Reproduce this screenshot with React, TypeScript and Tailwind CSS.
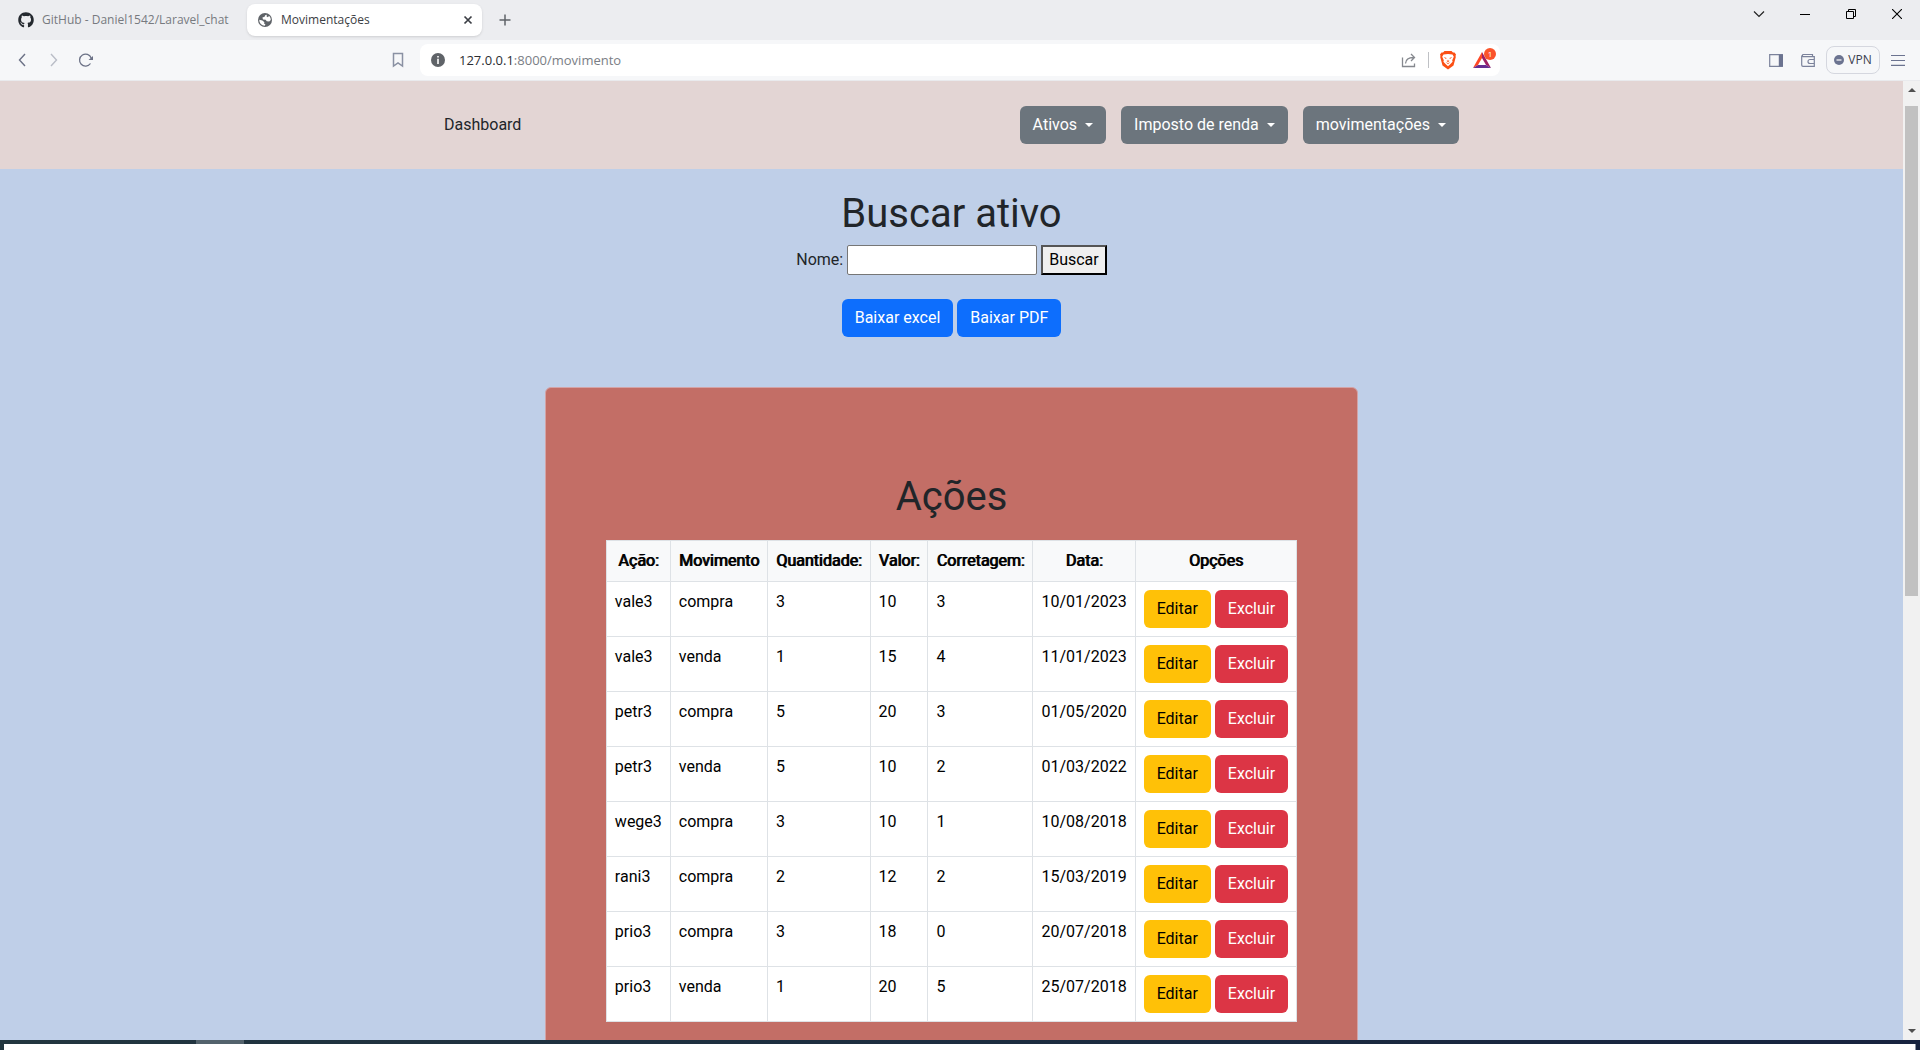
import React from "react";
import { FaGithub } from "react-icons/fa";

type Row = [string, string, string, string, string, string];

const rows: Row[] = [
  ["vale3", "compra", "3", "10", "3", "10/01/2023"],
  ["vale3", "venda", "1", "15", "4", "11/01/2023"],
  ["petr3", "compra", "5", "20", "3", "01/05/2020"],
  ["petr3", "venda", "5", "10", "2", "01/03/2022"],
  ["wege3", "compra", "3", "10", "1", "10/08/2018"],
  ["rani3", "compra", "2", "12", "2", "15/03/2019"],
  ["prio3", "compra", "3", "18", "0", "20/07/2018"],
  ["prio3", "venda", "1", "20", "5", "25/07/2018"],
];

const headers = ["Ação:", "Movimento", "Quantidade:", "Valor:", "Corretagem:", "Data:", "Opções"];

const iconButton = "flex h-8 w-8 items-center justify-center";

function TabStrip() {
  return (
    <div className="flex h-10 items-center bg-[#ecedf0] text-[12px] leading-4">
      <button className="flex h-8 w-[247px] items-center gap-2 pl-[18px] text-[#777a7f]">
        <FaGithub size={16} className="text-[#24292f]" />
        GitHub - Daniel1542/Laravel_chat
      </button>
      <div className="flex h-8 w-[235px] items-center rounded-lg bg-white px-[10px] text-[#3b3e44] shadow-sm">
        <svg width="16" height="16" viewBox="0 0 16 16" aria-hidden="true">
          <circle cx="8" cy="8" r="7" fill="#5f6368" />
          <path d="M9.800 2.800 8.200 3.200 7.600 4.800 5.400 5.600 6 7.400l2.600.4 1.200 1.400 2.400.2 1.400-1.200.2-1A5.800 5.800 0 0 0 12 3.800l-1 1.400-1.400-.6Z" fill="#fff" />
          <path d="M2.200 7.800 5.400 8.600l2 1.600-.4 1.200 1.400.8-.6 1.600A5.800 5.800 0 0 1 2.200 7.800Z" fill="#fff" />
        </svg>
        <span className="ml-2 flex-1">Movimentações</span>
        <button aria-label="Fechar guia" className="mr-[-4px] flex h-4 w-4 items-center justify-center">
          <svg width="10" height="10" viewBox="0 0 10 10" stroke="#3b3e44" strokeWidth="1.700">
            <path d="M1.500 1.500 8.500 8.500M8.500 1.500 1.500 8.500" />
          </svg>
        </button>
      </div>
      <button aria-label="Nova guia" className="ml-[7px] flex h-8 w-8 items-center justify-center">
        <svg width="12" height="12" viewBox="0 0 12 12" stroke="#5f6368" strokeWidth="1.500">
          <path d="M6 .5v11M.5 6h11" />
        </svg>
      </button>
      <div className="ml-auto flex h-10 items-start">
        <button aria-label="Pesquisar guias" className="flex h-7 w-[46px] items-center justify-center">
          <svg width="12" height="12" viewBox="0 0 12 12" fill="none" stroke="#222" strokeWidth="1.200">
            <path d="m1 3.500 5 5 5-5" />
          </svg>
        </button>
        <button aria-label="Minimizar" className="flex h-7 w-[46px] items-center justify-center">
          <svg width="10" height="10" viewBox="0 0 10 10" stroke="#000">
            <path d="M0 5.500h10" />
          </svg>
        </button>
        <button aria-label="Restaurar" className="flex h-7 w-[46px] items-center justify-center">
          <svg width="10" height="10" viewBox="0 0 10 10" fill="none" stroke="#000">
            <path d="M.5 2.500h7v7h-7ZM2.500 2.500v-2h7v7h-2" />
          </svg>
        </button>
        <button aria-label="Fechar" className="flex h-7 w-[46px] items-center justify-center">
          <svg width="10" height="10" viewBox="0 0 10 10" stroke="#000" strokeWidth="1.100">
            <path d="m0 0 10 10M10 0 0 10" />
          </svg>
        </button>
      </div>
    </div>
  );
}

function BraveLion() {
  return (
    <svg width="16" height="20" viewBox="0 0 16 20" aria-hidden="true">
      <path d="M4.500 1h7l1.500 1.500 1.500-.1L16 4.500l-.5 1.500.3 1-2.300 8.500L8 19.500 2.500 15.500.2 7l.3-1L0 4.500l1.500-2.100L3 2.500Z" fill="#fb4f14" />
      <path d="M3.500 4.500 8 4l4.500.5 1.300 2.300-1.600 3.400.4 1.600-2.400 2.400L8 16.200l-2.200-2-2.400-2.400.4-1.600-1.600-3.400Z" fill="#fff" />
      <path d="m3.600 7 3 1-.6 1ZM12.400 7l-3 1 .6 1ZM7 9.500 8 11.500l1-2 .2 1.700L8 12.300l-1.200-1.100ZM5.500 11.800 8 13.200l2.500-1.400L8 14.300Z" fill="#fb4f14" />
    </svg>
  );
}

function Toolbar() {
  return (
    <div className="flex h-[41px] items-center border-b border-[#e9eaed] bg-[#f6f7f9]">
      <div className="flex w-[420px] items-center pl-[6px]">
        <button aria-label="Voltar" className={iconButton}>
          <svg width="8" height="14" viewBox="0 0 8 14" fill="none" stroke="#6b7186" strokeWidth="1.400">
            <path d="M7 1 1.500 7 7 13" />
          </svg>
        </button>
        <button aria-label="Avançar" className={iconButton}>
          <svg width="8" height="14" viewBox="0 0 8 14" fill="none" stroke="#b9bdc7" strokeWidth="1.400">
            <path d="M1 1 6.500 7 1 13" />
          </svg>
        </button>
        <button aria-label="Recarregar" className={iconButton}>
          <svg width="16" height="16" viewBox="0 0 16 16" fill="none" stroke="#6b7186" strokeWidth="1.300">
            <path d="M12.500 11.500A6 6 0 1 1 13.200 6" />
            <path d="M15 4v4h-4.500Z" fill="#6b7186" stroke="none" />
          </svg>
        </button>
        <button aria-label="Adicionar favorito" className="mr-[6px] ml-auto flex h-8 w-8 items-center justify-center">
          <svg width="12" height="16" viewBox="0 0 12 16" fill="none" stroke="#8a91a3" strokeWidth="1.500">
            <path d="M1.500 1.500h9v12.500L6 10.800 1.500 14Z" />
          </svg>
        </button>
      </div>
      <div className="flex h-8 w-[1080px] min-w-0 shrink items-center rounded-lg bg-white pr-[2px] pl-[11px]">
        <svg width="14" height="14" viewBox="0 0 14 14" className="shrink-0" aria-hidden="true">
          <circle cx="7" cy="7" r="7" fill="#5f6368" />
          <path d="M6.200 3h1.600v1.600H6.200ZM6.200 5.800h1.600V11H6.200Z" fill="#fff" />
        </svg>
        <a href="#movimento" className="ml-[14px] flex-1 text-[13px] leading-5 text-[#7a7e85]">
          <span className="text-[#2b2d33]">127.0.0.1</span>:8000/movimento
        </a>
        <button aria-label="Compartilhar" className={iconButton}>
          <svg width="16" height="16" viewBox="0 0 16 16" fill="none" stroke="#85888e" strokeWidth="1.300">
            <path d="M1.500 5.500v9h12v-3M4.500 11.500c.3-4 3-6 8-6M10 2l3.500 3.500L10 9" />
          </svg>
        </button>
        <span className="mx-[3px] h-4 w-px bg-[#bfc1c5]" />
        <button aria-label="Brave Shields" className={iconButton}>
          <BraveLion />
        </button>
        <button aria-label="Brave Rewards" className="relative ml-[2px] flex h-8 w-8 items-center justify-center">
          <svg width="18" height="16" viewBox="0 0 18 16">
            <path d="M9 0 0 16l5-3 4-7Z" fill="#ff4724" />
            <path d="M9 0v6l4 7 5 3Z" fill="#9e1f63" />
            <path d="M0 16h18l-5-3H5Z" fill="#662d91" />
          </svg>
          <span className="absolute top-1 right-[2px] flex h-3 w-3 items-center justify-center rounded-full bg-[#fb542b] text-[8px] leading-3 text-white">
            1
          </span>
        </button>
      </div>
      <div className="ml-auto flex items-center pr-[6px]">
        <button aria-label="Painel lateral" className={iconButton}>
          <svg width="14" height="13" viewBox="0 0 14 13" fill="none" stroke="#7b829b" strokeWidth="1.200">
            <path d="M.7.7h12.600v11.600H.7Z" />
            <path d="M9.800.5H14v12H9.800Z" fill="#6b7390" stroke="none" />
          </svg>
        </button>
        <button aria-label="Carteira" className={iconButton}>
          <svg width="14" height="14" viewBox="0 0 14 14" fill="none" stroke="#7b829b" strokeWidth="1.200">
            <path d="M11.500 3.500v-2H2a1.300 1.300 0 0 0 0 2.200h11.300v9.600H2A1.300 1.300 0 0 1 .7 12V2.500M13.300 6.500H9a2 2 0 0 0 0 4h4.300" />
          </svg>
        </button>
        <button className="mr-[2px] ml-[2px] flex h-7 w-[54px] items-center justify-center gap-1 rounded-lg border border-[#d5d7df] text-[12px] leading-4 text-[#3b3e4f]">
          <svg width="10" height="10" viewBox="0 0 10 10" aria-hidden="true">
            <circle cx="5" cy="5" r="5" fill="#6b7390" />
            <path d="M2.500 5h5" stroke="#fff" strokeWidth="1.200" />
          </svg>
          VPN
        </button>
        <button aria-label="Menu" className={iconButton}>
          <svg width="14" height="12" viewBox="0 0 14 12" stroke="#6b7390" strokeWidth="1.200">
            <path d="M0 1.500h14M0 6.500h14M0 11.400h14" />
          </svg>
        </button>
      </div>
    </div>
  );
}

function Dropdown({ label }: { label: string }) {
  return (
    <button aria-haspopup="menu" className="flex items-center gap-2 rounded-md bg-[#6c757d] px-[13px] py-[7px] leading-6 text-white">
      {label}
      <span className="border-x-4 border-t-4 border-x-transparent border-t-white" />
    </button>
  );
}

function Page() {
  return (
    <div className="min-w-0 flex-1 overflow-hidden bg-[#bfcfe8] font-['Roboto',sans-serif] text-[16px] leading-6 text-[#212529]">
      <nav className="flex h-[88px] items-center bg-[#e3d5d4]">
        <div className="mx-auto flex w-full max-w-[1015px] items-center justify-between">
          <a href="#dashboard">Dashboard</a>
          <div className="flex gap-[15px]">
            <Dropdown label="Ativos" />
            <Dropdown label="Imposto de renda" />
            <Dropdown label="movimentações" />
          </div>
        </div>
      </nav>

      <main className="flex flex-col items-center pt-[21px]">
        <h1 className="text-[40px] leading-[48px]">Buscar ativo</h1>
        <form className="mt-[7px] flex items-center gap-1" onSubmit={(e) => e.preventDefault()}>
          <label htmlFor="nome">Nome:</label>
          <input id="nome" type="text" className="h-[30px] w-[190px] rounded-[2px] border border-[#767676] bg-white px-1" />
          <button className="h-[30px] border-2 border-t-[#555] border-r-black border-b-black border-l-[#555] bg-[#efefef] px-[6px] leading-6 text-black">
            Buscar
          </button>
        </form>
        <div className="mt-6 flex gap-1">
          <button className="rounded-md bg-[#0d6efd] px-[13px] py-[7px] text-white">Baixar excel</button>
          <button className="rounded-md bg-[#0d6efd] px-[13px] py-[7px] text-white">Baixar PDF</button>
        </div>

        <section className="mt-[50px] rounded-md border border-[#d3a3a6] bg-[#c36e66] px-[60px] pt-[85px] pb-[60px]">
          <h1 className="text-center text-[40px] leading-[48px]">Ações</h1>
          <table className="mt-[19px] border-collapse bg-white text-black">
            <thead className="bg-[#f8f9fa]">
              <tr>
                {headers.map((h) => (
                  <th key={h} className="border border-[#dee2e6] p-2 text-center font-normal [text-shadow:1px_0_0_#000]">
                    {h}
                  </th>
                ))}
              </tr>
            </thead>
            <tbody>
              {rows.map((r, i) => (
                <tr key={i}>
                  {r.map((c, j) => (
                    <td key={j} className="border border-[#dee2e6] p-2 align-top">
                      {c}
                    </td>
                  ))}
                  <td className="border border-[#dee2e6] p-2 align-top">
                    <div className="flex gap-1">
                      <button className="rounded-md bg-[#ffc107] px-[13px] py-[7px] text-black">Editar</button>
                      <button className="rounded-md bg-[#dc3545] px-[13px] py-[7px] text-white">Excluir</button>
                    </div>
                  </td>
                </tr>
              ))}
            </tbody>
          </table>
        </section>
      </main>
    </div>
  );
}

function Scrollbar() {
  return (
    <div className="flex w-[17px] shrink-0 flex-col items-center bg-[#f1f1f1]" aria-hidden="true">
      <span className="mt-[7px] border-x-4 border-b-4 border-x-transparent border-b-[#505050]" />
      <span className="mt-[14px] h-[490px] w-[13px] bg-[#c1c1c1]" />
      <span className="mt-auto mb-[7px] border-x-4 border-t-4 border-x-transparent border-t-[#505050]" />
    </div>
  );
}

export default function App() {
  return (
    <div className="flex h-screen flex-col overflow-hidden font-['Open_Sans',sans-serif]">
      <TabStrip />
      <Toolbar />
      <div className="flex min-h-0 flex-1">
        <Page />
        <Scrollbar />
      </div>
      <div className="h-[10px] shrink-0 bg-linear-to-r from-[#22363f] to-[#17233f] px-1">
        <div className="flex h-1">
          <span className="ml-[192px] w-12 bg-[#53626c]" />
        </div>
        <div className="h-[6px] border-r border-[#8a93a3] bg-white" />
      </div>
    </div>
  );
}
